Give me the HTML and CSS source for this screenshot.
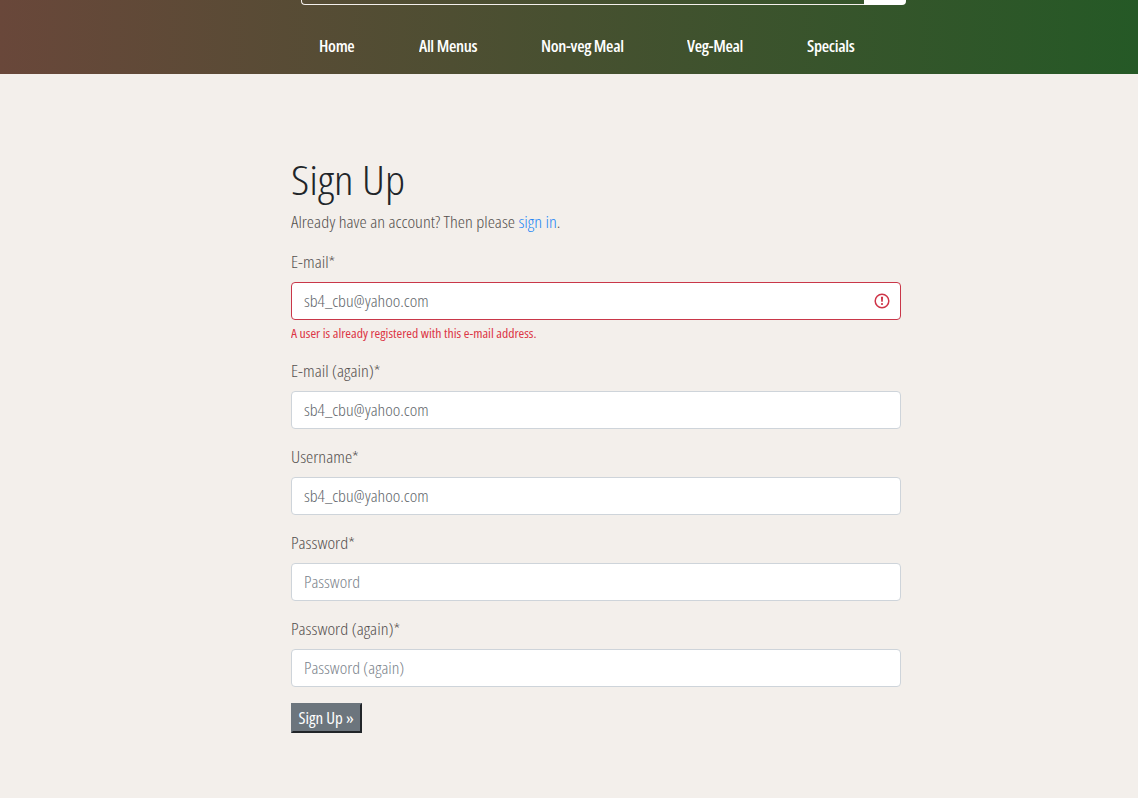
FILE: index.html
```html
<!DOCTYPE html>
<html lang="en">
<head>
<meta charset="utf-8">
<title>Sign Up</title>
<link rel="stylesheet" href="styles.css">
</head>
<body>
<header class="header">
  <div class="search"><div class="search-field"></div><div class="search-button"></div></div>
  <nav class="nav">
    <a class="home">Home</a><a class="all">All Menus</a><a class="nonveg">Non-veg Meal</a><a class="veg">Veg-Meal</a><a class="specials">Specials</a>
  </nav>
</header>
<main class="signup">
  <h1>Sign Up</h1>
  <p class="intro">Already have an account? Then please <a class="link">sign in</a>.</p>
  <form>
    <div class="group">
      <label for="email">E-mail*</label>
      <div class="field invalid">
        <input id="email" class="input" type="text" value="sb4_cbu@yahoo.com">
        <svg class="alert" viewBox="0 0 16 16" width="16" height="16"><circle cx="8" cy="8" r="6.8" fill="none" stroke="#cf3548" stroke-width="1.5"/><path d="M6.9 3.8h2.2l-.35 5h-1.5z" fill="#cf3548"/><circle cx="8" cy="11" r="1.1" fill="#cf3548"/></svg>
      </div>
      <div class="error">A user is already registered with this e-mail address.</div>
    </div>
    <div class="group">
      <label for="email2">E-mail (again)*</label>
      <div class="field"><input id="email2" class="input" type="text" value="sb4_cbu@yahoo.com"></div>
    </div>
    <div class="group">
      <label for="user">Username*</label>
      <div class="field"><input id="user" class="input" type="text" value="sb4_cbu@yahoo.com"></div>
    </div>
    <div class="group">
      <label for="pw">Password*</label>
      <div class="field"><input id="pw" class="input" type="password" placeholder="Password"></div>
    </div>
    <div class="group">
      <label for="pw2">Password (again)*</label>
      <div class="field"><input id="pw2" class="input" type="password" placeholder="Password (again)"></div>
    </div>
    <button class="submit" type="button"><span>Sign Up »</span></button>
  </form>
</main>
</body>
</html>
```
FILE: styles.css
```css
* { box-sizing: border-box; }
body {
  margin: 0;
  min-height: 798px;
  background: #f3efeb;
  color: #55514f;
  font: 300 16px/24px "Open Sans", sans-serif;
  font-stretch: 75%;
  overflow: hidden;
}
.header {
  height: 74px;
  background: linear-gradient(to right, #69473a, #255926);
}
.search {
  display: flex;
  width: 605px;
  height: 5px;
  margin-left: 301px;
}
.search-field {
  width: 563px;
  border: 1px solid #f3efeb;
  border-top: 0;
  border-right: 0;
  border-radius: 0 0 0 4px;
}
.search-button { width: 42px; background: #fff; border-radius: 0 0 4px 0; }
.nav {
  display: flex;
  gap: 64px;
  padding: 29px 0 0 319px;
  color: #fff;
  font-weight: 600;
  letter-spacing: -0.3px;
  white-space: nowrap;
}
.nav a { transform: scaleX(1.06); transform-origin: left; }
.home { width: 36px; }
.all { width: 58px; }
.nonveg { width: 82px; }
.veg { width: 56px; }
.specials { width: 49px; }
.signup { width: 610px; margin: 82px 0 0 291px; }
h1, .intro, label {
  width: max-content;
  transform: scaleX(1.145);
  transform-origin: left;
}
h1 {
  margin: 0 0 6px;
  color: #212529;
  font-size: 40px;
  line-height: 48px;
  font-weight: 300;
}
.intro { margin: 0 0 16px; }
.link { color: #2385f5; }
.group { margin-bottom: 16px; }
label { display: block; margin-bottom: 8px; }
.field {
  display: flex;
  align-items: center;
  justify-content: space-between;
  height: 38px;
  padding: 0 10px 0 12px;
  border: 1px solid #ced4da;
  border-radius: 4px;
  background: #fff;
}
.input {
  width: 480px;
  height: 36px;
  padding: 0;
  border: 0;
  outline: 0;
  background: transparent;
  color: #62676c;
  font: inherit;
  transform: scaleX(1.12);
  transform-origin: left;
}
.input::placeholder { color: #7b838b; opacity: 1; }
.invalid { border-color: #c93749; }
.error {
  width: max-content;
  margin-top: 4px;
  color: #dc3545;
  font-size: 12.8px;
  line-height: 19px;
  font-weight: 500;
  transform: scaleX(1.073);
  transform-origin: left;
}
.submit {
  display: block;
  width: 71px;
  height: 30px;
  padding: 1px 0;
  border: 2px solid;
  border-color: #6c757d #212529 #212529 #6c757d;
  background: #6c757d;
  color: #fff;
  font: inherit;
  font-weight: 400;
  white-space: nowrap;
}
.submit span { display: inline-block; transform: scaleX(1.06); }
```
